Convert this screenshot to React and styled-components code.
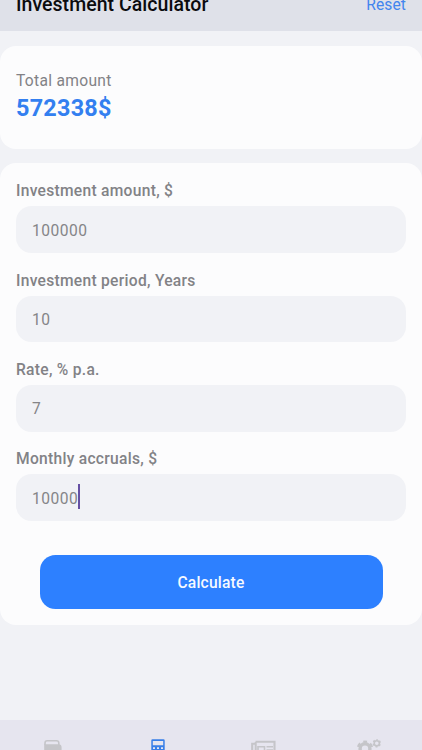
import React, { useState } from "react";
import styled, { createGlobalStyle } from "styled-components";

const initialFields = [
  { id: "amount", label: "Investment amount, $", value: "100000" },
  { id: "period", label: "Investment period, Years", value: "10" },
  { id: "rate", label: "Rate, % p.a.", value: "7" },
  { id: "monthly", label: "Monthly accruals, $", value: "10000" },
];

const WalletIcon = () => (
  <svg width="20" height="20" viewBox="0 0 20 20" fill="none">
    <path d="M2 6V4Q2 1.8 4.2 1.8H13.5Q15.8 1.8 15.8 4V6" stroke="#c5c5c9" strokeWidth="1.6" />
    <path d="M1.2 5.2H15.5Q18.6 5.2 18.6 8.5V18H1.2Z" fill="#c5c5c9" />
  </svg>
);

const CalculatorIcon = () => (
  <svg width="14" height="20" viewBox="0 0 14 20">
    <path
      fillRule="evenodd"
      d="M1.5 0.2H12.5Q13.7 0.2 13.7 1.5V18Q13.7 20 12 20H2Q0.3 20 0.3 18V1.5Q0.3 0.2 1.5 0.2ZM1.8 1.9V6.3H12.2V1.9ZM2 8.2V10H4V8.2ZM6 8.2V10H8V8.2ZM10 8.2V10H12V8.2Z"
      fill="#397fe8"
    />
  </svg>
);

const NewsIcon = () => (
  <svg width="25" height="20" viewBox="0 0 25 20" fill="none" stroke="#c5c5c9">
    <path d="M4.5 2.8H23.5V19H3Q1.2 19 1.2 17V4.8H4" strokeWidth="2.1" />
    <path d="M4.7 3V17" strokeWidth="2" />
    <path d="M7 7.7H13.5V12H7ZM15.5 7.7H22M15.5 11H22" strokeWidth="1.6" />
  </svg>
);

const GearsIcon = () => (
  <svg width="26" height="20" viewBox="0 0 26 20" fill="none" stroke="#c5c5c9">
    <circle cx="9" cy="9.7" r="4.9" strokeWidth="3.4" />
    <circle cx="9" cy="9.7" r="7.1" strokeWidth="2.4" strokeDasharray="4 3.435" strokeDashoffset="2" transform="rotate(-90 9 9.7)" />
    <circle cx="20.8" cy="4.3" r="2.6" strokeWidth="1.6" />
    <circle cx="20.8" cy="4.3" r="3.6" strokeWidth="1.3" strokeDasharray="1.9 1.87" strokeDashoffset="0.95" transform="rotate(-90 20.8 4.3)" />
  </svg>
);

const App = () => {
  const [fields, setFields] = useState(initialFields);
  const [total, setTotal] = useState(572338);

  const updateField = (id, value) => {
    setFields(fields.map((field) => (field.id === id ? { ...field, value } : field)));
  };

  const reset = () => {
    setFields(fields.map((field) => ({ ...field, value: "" })));
    setTotal(0);
  };

  const calculate = () => {
    const [amount, period, rate, monthly] = fields.map((field) => Number(field.value) || 0);
    let sum = amount;
    for (let year = 0; year < period; year++) {
      sum = (sum + monthly * 12) * (1 + rate / 100);
    }
    setTotal(Math.round(sum));
  };

  return (
    <>
      <GlobalStyle />
      <Screen>
        <Header>
          <Title>Investment Calculator</Title>
          <ResetButton onClick={reset}>Reset</ResetButton>
        </Header>
        <TotalCard>
          <TotalLabel>Total amount</TotalLabel>
          <TotalValue>{total}$</TotalValue>
        </TotalCard>
        <FormCard>
          {fields.map((field) => (
            <Field key={field.id}>
              <Label htmlFor={field.id}>{field.label}</Label>
              <InputBox>
                <Input
                  id={field.id}
                  $length={field.value.length}
                  value={field.value}
                  onChange={(e) => updateField(field.id, e.target.value)}
                />
                {field.id === "monthly" && <Caret />}
              </InputBox>
            </Field>
          ))}
          <CalculateButton onClick={calculate}>Calculate</CalculateButton>
        </FormCard>
        <TabBar>
          <Tab aria-label="Wallet">
            <WalletIcon />
          </Tab>
          <Tab aria-label="Calculator">
            <CalculatorIcon />
          </Tab>
          <Tab aria-label="News">
            <NewsIcon />
          </Tab>
          <Tab aria-label="Settings">
            <GearsIcon />
          </Tab>
        </TabBar>
      </Screen>
    </>
  );
};

export default App;

const GlobalStyle = createGlobalStyle`
  * {
    box-sizing: border-box;
  }

  body {
    margin: 0;
    background: #f1f2f6;
    font-family: Roboto, sans-serif;
  }

  button, input {
    font-family: inherit;
    border: none;
    padding: 0;
  }
`;

const Screen = styled.div`
  display: flex;
  flex-direction: column;
  height: 750px;
  overflow: hidden;
`;

const Header = styled.header`
  display: flex;
  justify-content: space-between;
  align-items: flex-start;
  flex: none;
  height: 31px;
  padding: 0 16px;
  background: #dfe1e9;
`;

const Title = styled.h1`
  margin: -7px 0 0;
  font-size: 19.5px;
  font-weight: 500;
  line-height: 24px;
  letter-spacing: 0.04px;
  color: #0b0b0e;
`;

const ResetButton = styled.button`
  margin-top: -7px;
  background: none;
  font-size: 15.6px;
  line-height: 24px;
  letter-spacing: 0.1px;
  color: #4385ee;
`;

const TotalCard = styled.section`
  flex: none;
  height: 103px;
  margin-top: 14.6px;
  padding: 25px 16px 0;
  border-radius: 16px;
  background: #fcfcfd;
`;

const TotalLabel = styled.div`
  font-size: 15.6px;
  line-height: 20px;
  letter-spacing: 0.3px;
  color: #828286;
`;

const TotalValue = styled.div`
  font-size: 23.4px;
  font-weight: 700;
  line-height: 34px;
  letter-spacing: 0.25px;
  color: #337ff0;
`;

const FormCard = styled.section`
  display: flex;
  flex-direction: column;
  flex: none;
  height: 462px;
  margin-top: 14.8px;
  padding: 16px 16px 0;
  border-radius: 16px;
  background: #fcfcfd;
`;

const Field = styled.div`
  flex: none;
  height: 89.25px;
`;

const Label = styled.label`
  display: block;
  height: 27px;
  font-size: 15.6px;
  font-weight: 500;
  line-height: 24px;
  letter-spacing: 0.28px;
  color: #828286;
`;

const InputBox = styled.div`
  display: flex;
  align-items: center;
  height: 46.8px;
  padding: 0 16px;
  border-radius: 15.5px;
  background: #f1f2f6;
`;

const Input = styled.input`
  width: ${({ $length }) => Math.max($length, 1) * 9.2}px;
  height: 26px;
  padding-top: 2px;
  outline: none;
  background: none;
  font-size: 15.6px;
  line-height: 24px;
  letter-spacing: 0.48px;
  color: #858588;
`;

const Caret = styled.span`
  flex: none;
  width: 2px;
  height: 25px;
  margin-top: -2px;
  background: #6550a4;
`;

const CalculateButton = styled.button`
  flex: none;
  height: 54px;
  margin: 19px 23.5px 0;
  padding-top: 1px;
  border-radius: 15.5px;
  background: #2d80ff;
  font-size: 15.6px;
  font-weight: 500;
  letter-spacing: 0.2px;
  color: #f5f9ff;
`;

const TabBar = styled.nav`
  display: grid;
  grid-template-columns: repeat(4, 1fr);
  align-items: start;
  flex: none;
  height: 62px;
  margin-top: 94.6px;
  padding-top: 19px;
  background: #e6e5ef;
`;

const Tab = styled.button`
  display: flex;
  justify-content: center;
  background: none;

  svg {
    display: block;
  }
`;
